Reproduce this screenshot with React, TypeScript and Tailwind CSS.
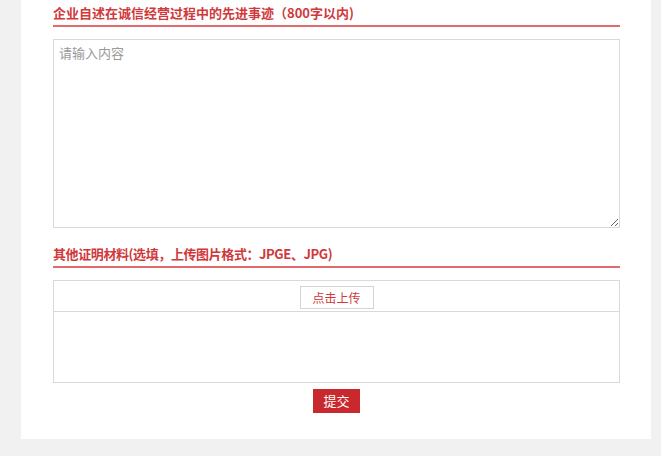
export default function App() {
  const font = { fontFamily: '"Microsoft YaHei", "Noto Sans CJK SC", sans-serif' };

  return (
    <div className="min-h-[456px] w-full bg-[#f1f1f1]" style={font}>
      <div className="ml-[21px] w-[630px] bg-white pl-[32px] pr-[31px] pt-[1px] pb-[26px]">
        <h2 className="h-[26px] border-b-2 border-[#e06a6c] text-[13px] font-bold leading-[24px] text-[#d0393b]">
          企业自述在诚信经营过程中的先进事迹（800字以内)
        </h2>

        <textarea
          placeholder="请输入内容"
          className="mt-[12px] block h-[189px] w-full resize-y border border-[#d9d9d9] px-[5px] py-[3px] text-[13px] leading-[20px] text-[#333] outline-none placeholder:text-[#999]"
        />

        <h2 className="mt-[14px] h-[26px] border-b-2 border-[#e06a6c] text-[13px] font-bold leading-[24px] tracking-[-0.4px] text-[#d0393b]">
          其他证明材料(选填，上传图片格式：JPGE、JPG)
        </h2>

        <div className="mt-[12px] border border-[#d9d9d9]">
          <div className="flex h-[31px] items-center justify-center border-b border-[#d9d9d9] pt-[3px]">
            <button className="h-[23px] w-[74px] border border-[#d4d4d4] bg-white text-[12px] text-[#d0393b]">
              点击上传
            </button>
          </div>
          <div className="h-[70px]" />
        </div>

        <div className="mt-[6px] flex justify-center">
          <button className="h-[24px] w-[47px] bg-[#c9282d] text-[13px] text-white">提交</button>
        </div>
      </div>
    </div>
  );
}
